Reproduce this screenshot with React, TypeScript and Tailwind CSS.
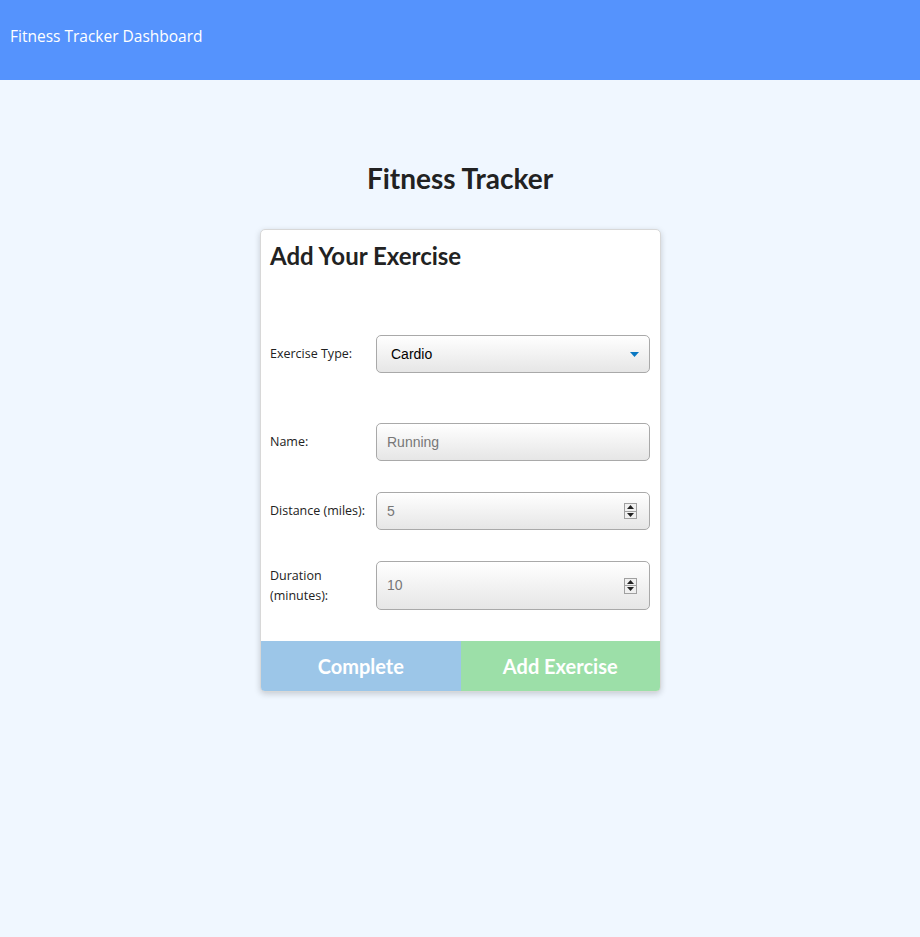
import React from "react";

function Spinner() {
  return (
    <div className="flex h-[16px] w-[13px] flex-col border border-[#a0a0a0] bg-[#f0f0f0]">
      <div className="flex flex-1 items-center justify-center border-b border-[#a0a0a0]">
        <svg width="7" height="4" viewBox="0 0 7 4"><path d="M3.5 0 L7 4 L0 4 Z" fill="#222" /></svg>
      </div>
      <div className="flex flex-1 items-center justify-center">
        <svg width="7" height="4" viewBox="0 0 7 4"><path d="M0 0 L7 0 L3.5 4 Z" fill="#222" /></svg>
      </div>
    </div>
  );
}

const fieldCls =
  "flex flex-1 items-center rounded-[5px] border border-[#a9a9a9] bg-gradient-to-b from-[#ffffff] to-[#e6e6e6] text-[14px] font-['Liberation_Sans',Arial,sans-serif]";

export default function App() {
  return (
    <div className="min-h-[937px] bg-[#f0f7ff] font-['Open_Sans',sans-serif]">
      <header className="flex h-[80px] items-center bg-[#5593fd] px-[10px] pb-[6px] text-[15.5px] text-white">
        Fitness Tracker Dashboard
      </header>
      <main className="flex flex-col items-center">
        <h1 className="mt-[79px] font-['Lato',sans-serif] text-[28px] font-bold leading-[38px] text-[#222]">
          Fitness Tracker
        </h1>
        <div className="ml-[1px] mt-[32px] w-[401px] overflow-hidden rounded-[5px] border border-[#d8d8d8] bg-white shadow-[0_2px_6px_rgba(0,0,0,0.18)]">
          <div className="pb-[31px] pl-[9px] pr-[10px] pt-[10px]">
            <h2 className="font-['Lato',sans-serif] text-[24px] font-bold leading-[32px] text-[#222]">
              Add Your Exercise
            </h2>
            <div className="mt-[63px] flex items-center">
              <div className="w-[106px] text-[12.5px] text-[#222]">Exercise Type:</div>
              <div className={fieldCls + " h-[38px] justify-between pl-[14px] pr-[10px] text-black"}>
                <span>Cardio</span>
                <svg width="9" height="5" viewBox="0 0 9 5"><path d="M0 0 L9 0 L4.5 5 Z" fill="#0a78c2" /></svg>
              </div>
            </div>
            <div className="mt-[50px] flex items-center">
              <div className="w-[106px] text-[12.5px] text-[#222]">Name:</div>
              <div className={fieldCls + " h-[38px] pl-[10px] text-[#777]"}>Running</div>
            </div>
            <div className="mt-[31px] flex items-center">
              <div className="w-[106px] text-[12.5px] text-[#222]">Distance (miles):</div>
              <div className={fieldCls + " h-[38px] justify-between pl-[10px] pr-[12px] text-[#777]"}>
                <span>5</span>
                <Spinner />
              </div>
            </div>
            <div className="mt-[31px] flex items-center">
              <div className="w-[106px] text-[12.5px] leading-[20px] text-[#222]">
                Duration
                <br />
                (minutes):
              </div>
              <div className={fieldCls + " h-[49px] justify-between pl-[10px] pr-[12px] text-[#777]"}>
                <span>10</span>
                <Spinner />
              </div>
            </div>
          </div>
          <div className="flex h-[50px] font-['Lato',sans-serif] text-[20px] font-bold text-white">
            <div className="flex flex-1 items-center justify-center bg-[#9cc6e8]">Complete</div>
            <div className="flex flex-1 items-center justify-center bg-[#9cdfa8]">Add Exercise</div>
          </div>
        </div>
      </main>
    </div>
  );
}
